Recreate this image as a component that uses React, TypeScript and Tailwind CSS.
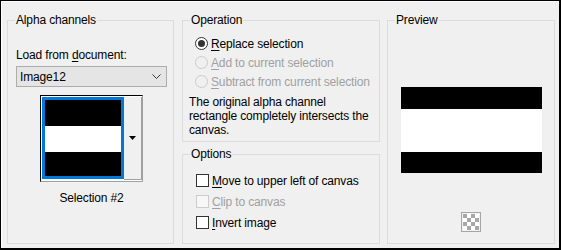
import type { ReactNode } from 'react'

const font = "[font-family:'Liberation_Sans',Arial,sans-serif]"

function Group({ title, className, children }: { title: string; className: string; children: ReactNode }) {
  return (
    <fieldset className={`border border-[#dcdcdc] min-w-0 ${className}`}>
      <legend className="ml-[7px] px-[1px] text-[12px] leading-[16px] text-black">{title}</legend>
      {children}
    </fieldset>
  )
}

function Mn({ k, rest }: { k: string; rest: string }) {
  return (
    <span>
      <u className="underline-offset-[2px]">{k}</u>
      {rest}
    </span>
  )
}

function Radio({ checked, disabled }: { checked?: boolean; disabled?: boolean }) {
  return (
    <div
      className={`w-[13px] h-[13px] rounded-full border flex items-center justify-center shrink-0 ${
        disabled ? 'border-[#cccccc] bg-[#f0f0f0]' : 'border-[#333333] bg-white'
      }`}
    >
      {checked && <div className="w-[7px] h-[7px] rounded-full bg-[#333333]" />}
    </div>
  )
}

function Check({ disabled }: { disabled?: boolean }) {
  return (
    <div
      className={`w-[13px] h-[13px] border shrink-0 ${
        disabled ? 'border-[#cccccc] bg-[#f7f7f7]' : 'border-[#333333] bg-white'
      }`}
    />
  )
}

function Checker() {
  const cells = []
  for (let r = 0; r < 4; r++) {
    for (let c = 0; c < 4; c++) {
      if ((r + c) % 2 === 0) cells.push(<rect key={`${r}-${c}`} x={2 + c * 4} y={2 + r * 4} width={4} height={4} fill="#a8a8a8" />)
    }
  }
  return (
    <svg width="20" height="20" viewBox="0 0 20 20" className="mx-auto block">
      <rect x="0.5" y="0.5" width="19" height="19" fill="#f4f4f4" stroke="#a6a6a6" />
      <rect x="2" y="2" width="16" height="16" fill="#ffffff" />
      {cells}
    </svg>
  )
}

export default function App() {
  return (
    <div className={`w-[561px] h-[250px] bg-[#f0f0f0] border-t border-l border-r-2 border-b-2 border-black ${font} text-[12px] tracking-[-0.15px] text-black`}>
      <div className="w-full h-full border-t border-l border-white flex pl-[5px] pt-[10px] gap-[8px]">
        {/* Alpha channels */}
        <Group title="Alpha channels" className="w-[167px] h-[232px]">
          <div className="pl-[8px] pr-[6px]">
            <div className="mt-[19px] leading-[16px]">
              Load from <u className="underline-offset-[2px]">d</u>ocument:
            </div>
            <div className="mt-[3px] h-[21px] border border-[#adadad] bg-[#e5e5e5] flex items-center justify-between pl-[3px] pr-[5px]">
              <span className="leading-[16px]">Image12</span>
              <svg width="9" height="5" viewBox="0 0 9 5">
                <path d="M0.5 0.5 L4.5 4.5 L8.5 0.5" fill="none" stroke="#333333" strokeWidth="1" />
              </svg>
            </div>
            <div className="mx-auto mt-[8px] w-[103px] h-[87px] flex border border-t-black border-l-black border-r-[#a0a0a0] border-b-[#a0a0a0] bg-white pt-[1px] pl-[1px]">
              <div className="w-[82px] h-[82px] border-[3px] border-[#0078d7] flex flex-col">
                <div className="h-[26px] bg-black" />
                <div className="h-[26px] bg-white" />
                <div className="flex-1 bg-black" />
              </div>
              <div className="flex-1 h-[83px] bg-[#f0f0f0] border-r border-b border-[#a0a0a0] flex items-center justify-center">
                <svg width="7" height="4" viewBox="0 0 7 4">
                  <path d="M0 0 H7 L3.5 4 Z" fill="#000000" />
                </svg>
              </div>
            </div>
            <div className="mt-[8px] text-center leading-[16px]">Selection #2</div>
          </div>
        </Group>

        {/* Operation + Options */}
        <div className="w-[198px] flex flex-col gap-[4px]">
          <Group title="Operation" className="h-[130px]">
            <div className="pl-[6px] pr-[4px]">
              <div className="mt-[6px] pl-[6px]">
                <div className="h-[19px] flex items-center gap-[3px]">
                  <Radio checked />
                  <Mn k="R" rest="eplace selection" />
                </div>
                <div className="h-[19px] flex items-center gap-[3px] text-[#a0a0a0]">
                  <Radio disabled />
                  <Mn k="A" rest="dd to current selection" />
                </div>
                <div className="h-[19px] flex items-center gap-[3px] text-[#a0a0a0]">
                  <Radio disabled />
                  <Mn k="S" rest="ubtract from current selection" />
                </div>
              </div>
              <p className="mt-[4px] leading-[14px]">
                The original alpha channel
                <br />
                rectangle completely intersects the
                <br />
                canvas.
              </p>
            </div>
          </Group>
          <Group title="Options" className="h-[98px]">
            <div className="mt-[8px] pl-[13px]">
              <div className="h-[21px] flex items-center gap-[3px]">
                <Check />
                <Mn k="M" rest="ove to upper left of canvas" />
              </div>
              <div className="h-[21px] flex items-center gap-[3px] text-[#a0a0a0]">
                <Check disabled />
                <Mn k="C" rest="lip to canvas" />
              </div>
              <div className="h-[21px] flex items-center gap-[3px]">
                <Check />
                <Mn k="I" rest="nvert image" />
              </div>
            </div>
          </Group>
        </div>

        {/* Preview */}
        <Group title="Preview" className="w-[168px] h-[232px] -ml-[1px]">
          <div className="mt-[59px] mx-auto w-[141px] h-[86px] flex flex-col">
            <div className="h-[22px] bg-black" />
            <div className="h-[43px] bg-white" />
            <div className="flex-1 bg-black" />
          </div>
          <div className="mt-[39px]">
            <Checker />
          </div>
        </Group>
      </div>
    </div>
  )
}
